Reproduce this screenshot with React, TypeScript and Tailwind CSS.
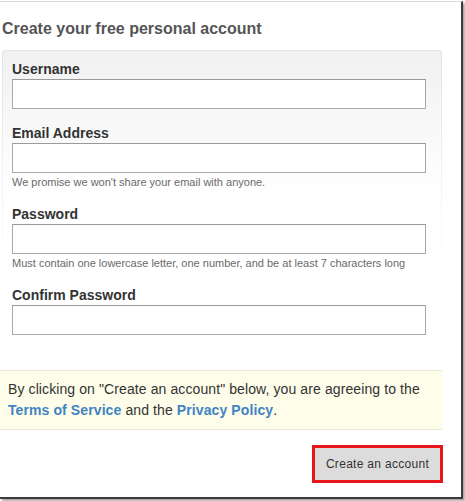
import React from 'react'

interface Field {
  label: string
  type: string
  hint?: string
}

const fields: Field[] = [
  { label: 'Username', type: 'text' },
  { label: 'Email Address', type: 'email', hint: "We promise we won't share your email with anyone." },
  { label: 'Password', type: 'password', hint: 'Must contain one lowercase letter, one number, and be at least 7 characters long' },
  { label: 'Confirm Password', type: 'password' },
]

export default function App() {
  return (
    <div className="w-[465px] h-[501px] bg-white font-['Liberation_Sans',Arial,sans-serif]">
      <div className="mt-px w-[463px] h-[498px] bg-white border-t border-t-[#dadada] border-r-2 border-r-[#3c3c3c] border-b-2 border-b-[#3c3c3c] shadow-[2px_2px_2px_rgba(0,0,0,0.35)]">
        <h2 className="pt-[17px] pl-[2px] text-[16px] leading-[20px] font-bold text-[#555]">
          Create your free personal account
        </h2>

        {/* Form panel: fading border via outer gradient */}
        <div className="mt-[11px] ml-[2px] w-[440px] h-[320px] pt-px px-px rounded-t-[4px] bg-gradient-to-b from-[#e2e2e2] to-white to-[70%]">
          <div className="h-full pt-[9px] pl-[9px] rounded-t-[3px] bg-gradient-to-b from-[#f1f1f1] to-white to-[45%]">
            {fields.map((f, i) => (
              <div key={f.label} className={i === 0 ? '' : i === 1 ? 'mt-[15px]' : 'mt-[16px]'}>
                <label className="block text-[14px] leading-[18px] font-bold text-[#333] mb-px">
                  {f.label}
                </label>
                <input
                  type={f.type}
                  className="block w-[414px] h-[30px] bg-white border border-[#a8a8a8] border-t-[#9a9a9a] outline-none"
                />
                {f.hint && (
                  <p className="mt-[2px] text-[11px] leading-[14px] text-[#6a6a6a]">{f.hint}</p>
                )}
              </div>
            ))}
          </div>
        </div>

        {/* Terms notice */}
        <div className="w-[442px] h-[60px] pt-[8px] pl-[8px] border-y border-[#e6e6d9] bg-[#fdfde9] text-[14px] leading-[21px] tracking-[0.1px] text-[#333] whitespace-nowrap">
          By clicking on "Create an account" below, you are agreeing to the
          <br />
          <a className="font-bold text-[#4183c4]">Terms of Service</a> and the{' '}
          <a className="font-bold text-[#4183c4]">Privacy Policy</a>.
        </div>

        <div className="mt-[15px] w-[443px] flex justify-end">
          <button className="w-[131px] h-[38px] border-[3px] border-[#e8151b] bg-[#dcdcdc] text-[12px] tracking-[0.3px] text-[#333]">
            Create an account
          </button>
        </div>
      </div>
    </div>
  )
}
